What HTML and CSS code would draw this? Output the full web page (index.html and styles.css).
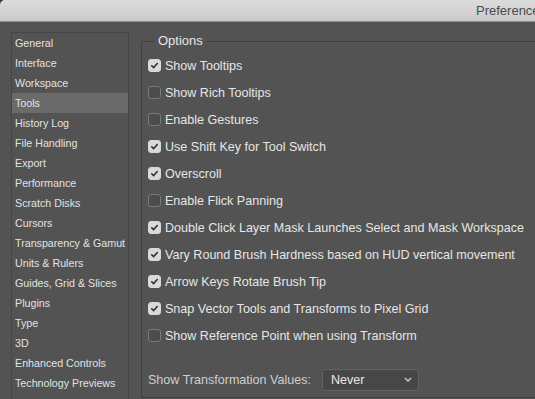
FILE: index.html
```html
<!DOCTYPE html>
<html>
<head>
<meta charset="utf-8">
<link rel="stylesheet" href="styles.css">
</head>
<body>
<div class="window">
  <div class="titlebar"><span class="title">Preferences</span></div>
  <div class="content">
    <ul class="sidebar">
      <li>General</li>
      <li>Interface</li>
      <li>Workspace</li>
      <li class="selected">Tools</li>
      <li>History Log</li>
      <li>File Handling</li>
      <li>Export</li>
      <li>Performance</li>
      <li>Scratch Disks</li>
      <li>Cursors</li>
      <li>Transparency &amp; Gamut</li>
      <li>Units &amp; Rulers</li>
      <li>Guides, Grid &amp; Slices</li>
      <li>Plugins</li>
      <li>Type</li>
      <li>3D</li>
      <li>Enhanced Controls</li>
      <li>Technology Previews</li>
    </ul>
    <fieldset class="options">
      <legend class="legend">Options</legend>
      <label class="row"><span class="cb on"><svg viewBox="0 0 13 13"><path d="M3.2 6.8 L5.5 9 L9.8 4.2" /></svg></span>Show Tooltips</label>
      <label class="row"><span class="cb"></span>Show Rich Tooltips</label>
      <label class="row"><span class="cb"></span>Enable Gestures</label>
      <label class="row"><span class="cb on"><svg viewBox="0 0 13 13"><path d="M3.2 6.8 L5.5 9 L9.8 4.2" /></svg></span>Use Shift Key for Tool Switch</label>
      <label class="row"><span class="cb on"><svg viewBox="0 0 13 13"><path d="M3.2 6.8 L5.5 9 L9.8 4.2" /></svg></span>Overscroll</label>
      <label class="row"><span class="cb"></span>Enable Flick Panning</label>
      <label class="row"><span class="cb on"><svg viewBox="0 0 13 13"><path d="M3.2 6.8 L5.5 9 L9.8 4.2" /></svg></span>Double Click Layer Mask Launches Select and Mask Workspace</label>
      <label class="row"><span class="cb on"><svg viewBox="0 0 13 13"><path d="M3.2 6.8 L5.5 9 L9.8 4.2" /></svg></span>Vary Round Brush Hardness based on HUD vertical movement</label>
      <label class="row"><span class="cb on"><svg viewBox="0 0 13 13"><path d="M3.2 6.8 L5.5 9 L9.8 4.2" /></svg></span>Arrow Keys Rotate Brush Tip</label>
      <label class="row"><span class="cb on"><svg viewBox="0 0 13 13"><path d="M3.2 6.8 L5.5 9 L9.8 4.2" /></svg></span>Snap Vector Tools and Transforms to Pixel Grid</label>
      <label class="row"><span class="cb"></span>Show Reference Point when using Transform</label>
      <div class="select-row">
        <span class="select-label">Show Transformation Values:</span>
        <span class="select">Never<svg class="chev" viewBox="0 0 8 5"><path d="M1 1 L4 4 L7 1" /></svg></span>
      </div>
    </fieldset>
  </div>
</div>
</body>
</html>
```
FILE: styles.css
```css
html, body {
  margin: 0;
  padding: 0;
  background: #3a3a3a;
  overflow: hidden;
}
.window {
  width: 535px;
  height: 399px;
  background: #535353;
  border-top-left-radius: 5px;
  overflow: hidden;
  font-family: "Liberation Sans", Arial, sans-serif;
  display: flex;
  flex-direction: column;
}
.titlebar {
  height: 22px;
  flex: none;
  background: linear-gradient(#dcdcdc, #cacaca);
  border-bottom: 1px solid #8f8f8f;
  box-sizing: border-box;
  display: flex;
  align-items: center;
  padding-left: 476px;
  white-space: nowrap;
  overflow: hidden;
}
.title {
  font-size: 13px;
  color: #4b4b4b;
}
.content {
  display: flex;
  align-items: flex-start;
  padding: 10px 0 0 11px;
  flex: 1;
  min-height: 0;
}
.sidebar {
  list-style: none;
  margin: 0;
  padding: 0;
  width: 118px;
  flex: none;
  border: 1px solid #464646;
  box-sizing: border-box;
  height: 400px;
}
.sidebar li {
  height: 20px;
  line-height: 20px;
  font-size: 10.7px;
  color: #e2e2e2;
  padding-left: 3px;
  white-space: nowrap;
}
.sidebar li.selected {
  background: #6a6a6a;
}
.options {
  flex: none;
  width: 600px;
  margin: 0 0 0 12px;
  padding: 2px 0 6px 6px;
  border: 1px solid #404040;
  min-width: 0;
  box-sizing: border-box;
}
.legend {
  padding: 0 4px;
  margin-left: 6px;
  font-size: 13px;
  line-height: 18px;
  color: #e6e6e6;
}
.row {
  display: flex;
  align-items: center;
  height: 27px;
  font-size: 12.55px;
  color: #e6e6e6;
  white-space: nowrap;
}
.cb {
  width: 13px;
  height: 13px;
  box-sizing: border-box;
  border: 1px solid #7a7a7a;
  border-radius: 3px;
  background: #4c4c4c;
  margin-right: 4px;
  flex: none;
  display: flex;
}
.cb.on {
  background: #d9d9d9;
  border-color: #d9d9d9;
}
.cb svg {
  width: 11px;
  height: 11px;
  fill: none;
  stroke: #2a2a2a;
  stroke-width: 1.8;
  stroke-linecap: round;
  stroke-linejoin: round;
}
.select-row {
  display: flex;
  align-items: center;
  margin-top: 19px;
  height: 23px;
}
.select-label {
  font-size: 12.55px;
  color: #cfcfcf;
  width: 174px;
}
.select {
  width: 97px;
  height: 22px;
  box-sizing: border-box;
  background: #474747;
  border: 1px solid #636363;
  border-radius: 3px;
  display: flex;
  align-items: center;
  justify-content: space-between;
  padding: 0 6px 0 8px;
  font-size: 12.55px;
  color: #e8e8e8;
}
.chev {
  width: 8px;
  height: 5px;
  fill: none;
  stroke: #d0d0d0;
  stroke-width: 1.3;
}
```
